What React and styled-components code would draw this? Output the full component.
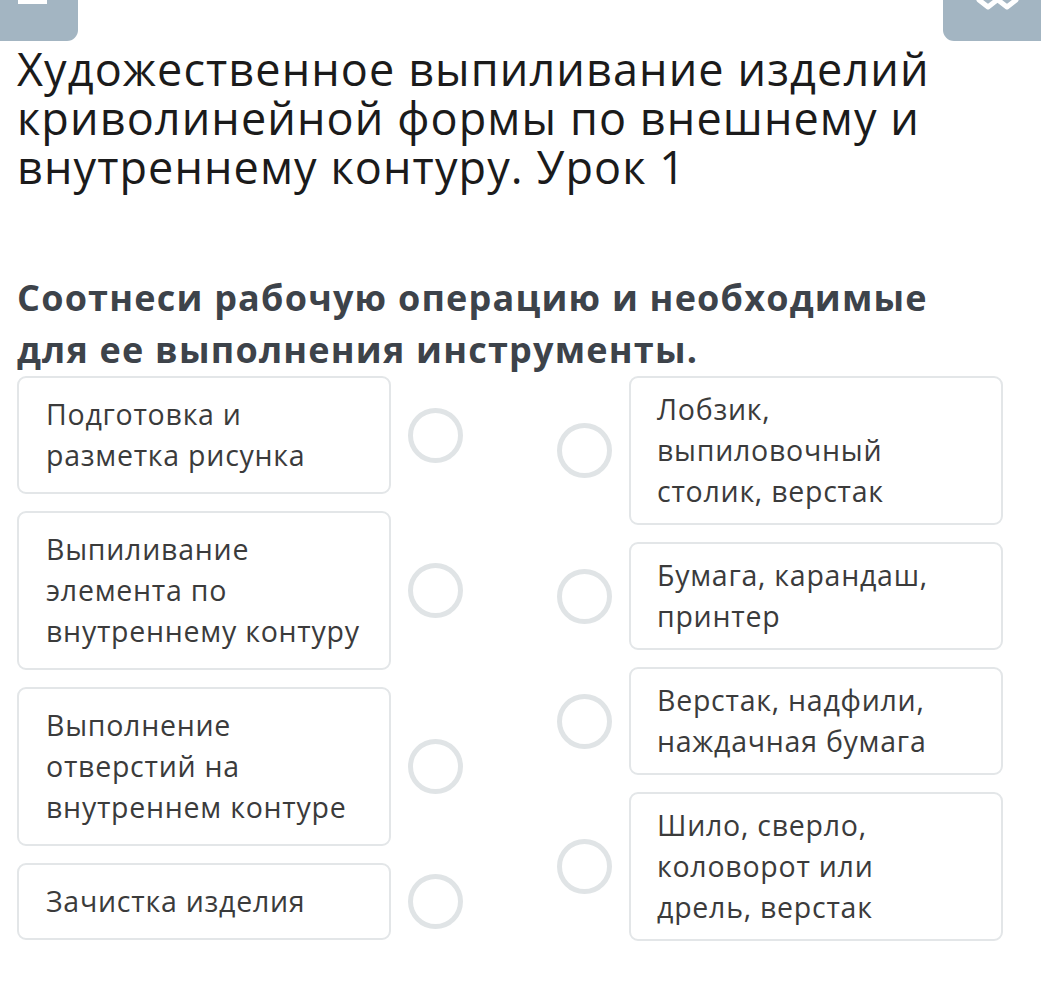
import React from "react";
import styled, { createGlobalStyle } from "styled-components";

const Global = createGlobalStyle`
  html, body { margin: 0; padding: 0; background: #fff; }
  body { font-family: "Open Sans", "Noto Sans", sans-serif; }
`;

const Page = styled.div`
  width: 1041px;
  min-height: 982px;
  background: #fff;
`;

const TopBar = styled.div`
  display: flex;
  justify-content: space-between;
  height: 41px;
`;

const CornerButton = styled.div`
  background: #a3b5c2;
  height: 41px;
  width: ${(p) => p.$w}px;
  border-radius: ${(p) => (p.$side === "left" ? "0 0 11px 0" : "0 0 0 11px")};
  display: flex;
  justify-content: center;
  align-items: flex-start;
`;

const Title = styled.h1`
  margin: 3px 0 0 17px;
  font-weight: 400;
  font-size: 45px;
  line-height: 49px;
  color: #1b1b1b;
  letter-spacing: 1.1px;
  white-space: nowrap;
`;

const Question = styled.h2`
  margin: 81px 0 0 17px;
  font-weight: 700;
  font-size: 36px;
  line-height: 52px;
  color: #3d434a;
  letter-spacing: 1.2px;
  white-space: nowrap;
`;

const Match = styled.div`
  display: flex;
  justify-content: space-between;
  padding: 0 38px 0 17px;
`;

const Column = styled.div`
  display: flex;
  flex-direction: column;
  gap: 17px;
`;

const Row = styled.div`
  display: flex;
  align-items: center;
  gap: 17px;
`;

const Card = styled.div`
  box-sizing: border-box;
  width: 374px;
  border: 2px solid #e3e6e8;
  border-radius: 9px;
  padding: ${(p) => (p.$tight ? "11px 16px 11px 26px" : "16px 16px 16px 27px")};
  font-size: 28.5px;
  line-height: 41px;
  letter-spacing: 0.75px;
  color: #3b3b3b;
  background: #fff;
  white-space: nowrap;
`;

const Dot = styled.div`
  box-sizing: border-box;
  width: 55px;
  height: 55px;
  border-radius: 50%;
  border: 5px solid #e0e4e6;
  flex-shrink: 0;
`;

const left = [
  ["Подготовка и", "разметка рисунка"],
  ["Выпиливание", "элемента по", "внутреннему контуру"],
  ["Выполнение", "отверстий на", "внутреннем контуре"],
  ["Зачистка изделия"],
];

const right = [
  ["Лобзик,", "выпиловочный", "столик, верстак"],
  ["Бумага, карандаш,", "принтер"],
  ["Верстак, надфили,", "наждачная бумага"],
  ["Шило, сверло,", "коловорот или", "дрель, верстак"],
];

const Lines = ({ lines }) =>
  lines.map((l, i) => (
    <React.Fragment key={i}>
      {l}
      {i < lines.length - 1 && <br />}
    </React.Fragment>
  ));

export default function App() {
  return (
    <Page>
      <Global />
      <TopBar>
        <CornerButton $w={78} $side="left">
          <svg width="78" height="8" viewBox="0 0 78 8">
            <rect x="18" y="0" width="29" height="4" fill="#fff" />
          </svg>
        </CornerButton>
        <CornerButton $w={98} $side="right">
          <svg width="98" height="10" viewBox="0 0 98 10">
            <path d="M36 0 L45 7 L54 0" stroke="#fff" strokeWidth="5" fill="none" strokeLinejoin="round" strokeLinecap="round" />
            <path d="M55 0 L64 7 L73 0" stroke="#fff" strokeWidth="5" fill="none" strokeLinejoin="round" strokeLinecap="round" />
          </svg>
        </CornerButton>
      </TopBar>
      <Title>
        Художественное выпиливание изделий
        <br />
        криволинейной формы по внешнему и
        <br />
        внутреннему контуру. Урок 1
      </Title>
      <Question>
        Соотнеси рабочую операцию и необходимые
        <br />
        для ее выполнения инструменты.
      </Question>
      <Match>
        <Column>
          {left.map((l, i) => (
            <Row key={i}>
              <Card>
                <Lines lines={l} />
              </Card>
              <Dot />
            </Row>
          ))}
        </Column>
        <Column>
          {right.map((l, i) => (
            <Row key={i}>
              <Dot />
              <Card $tight>
                <Lines lines={l} />
              </Card>
            </Row>
          ))}
        </Column>
      </Match>
    </Page>
  );
}
